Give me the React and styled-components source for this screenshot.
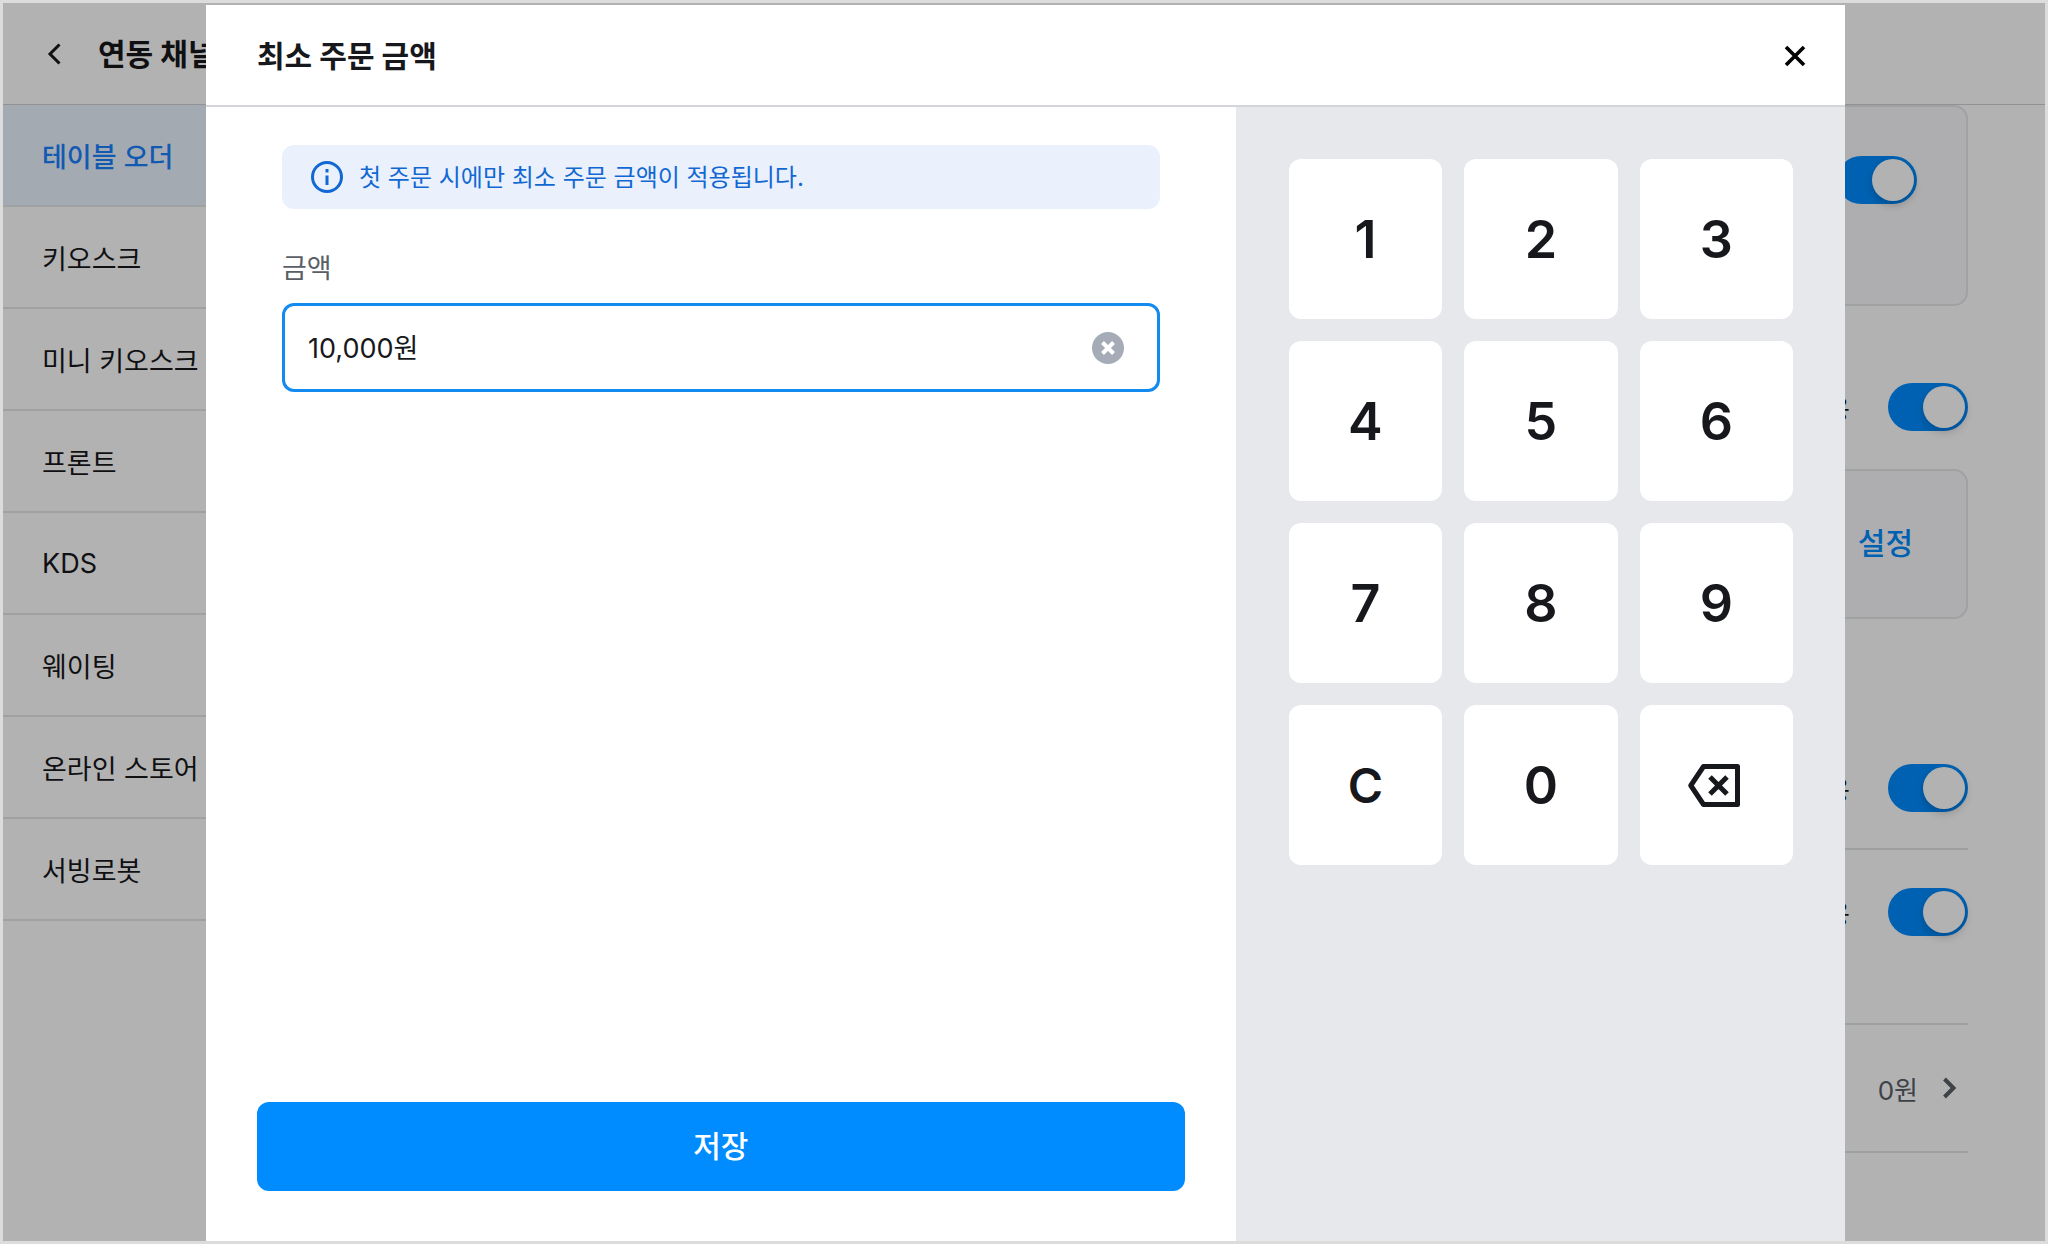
import React, { useState } from "react";
import styled, { createGlobalStyle } from "styled-components";

const blue = "#008cff";
const ink = "#17181c";

const GlobalStyle = createGlobalStyle`
  *, *::before, *::after { box-sizing: border-box; }
  body {
    margin: 0;
    color: ${ink};
    background: #dcdcdc;
    font-family: Inter, "Noto Sans CJK KR", sans-serif;
    font-size: 27px;
  }
  button, input { font: inherit; color: inherit; }
  button { border: 0; padding: 0; background: none; cursor: pointer; }
  h1, h2, p { margin: 0; }
`;

const Frame = styled.div`
  position: relative;
  display: flex;
  flex-direction: column;
  height: 100vh;
  border: 3px solid #dcdcdc;
  background: #fff;
  overflow: hidden;
`;

const AppHeader = styled.header`
  display: flex;
  align-items: center;
  gap: 24px;
  height: 102px;
  flex: none;
  padding: 0 31px;
  border-bottom: 1px solid #d2d2d4;
`;

const IconButton = styled.button`
  display: grid;
  place-items: center;
  width: 40px;
  height: 40px;
`;

const Title = styled.h1`
  font-size: 30px;
  line-height: 40px;
  font-weight: 700;
`;

const Columns = styled.div`
  display: flex;
  flex: 1;
  min-height: 0;
`;

const Sidebar = styled.nav`
  flex: none;
  width: 543px;
  border-right: 1px solid #dfe0e2;
`;

const SideLink = styled.a`
  display: flex;
  align-items: center;
  height: 102px;
  padding: 0 39px;
  border-bottom: 2px solid #e6e7e9;
  text-decoration: none;
  color: ${(p) => (p.$active ? "#1a80ff" : ink)};
  background: ${(p) => (p.$active ? "#eaf4ff" : "transparent")};
  font-weight: ${(p) => (p.$active ? 500 : 400)};
`;

const Main = styled.main`
  flex: 1;
  min-width: 0;
  padding: 0 77px;
`;

const Card = styled.section`
  display: flex;
  justify-content: flex-end;
  align-items: ${(p) => (p.$top ? "flex-start" : "center")};
  height: ${(p) => (p.$top ? 201 : 150)}px;
  padding: 49px;
  border: 2px solid #e6e7e9;
  border-radius: 14px;
  background: #fafafc;
`;

const Setting = styled.section`
  display: flex;
  justify-content: flex-end;
  align-items: center;
  gap: 38px;
  padding-top: ${(p) => p.$top}px;
  padding-bottom: ${(p) => p.$bottom}px;
  border-bottom: ${(p) => (p.$line ? "2px solid #e3e4e6" : "0")};
  font-size: 26px;
`;

const SwitchLabel = styled.label`
  display: flex;
  align-items: center;
  gap: 38px;
`;

const Switch = styled.input`
  appearance: none;
  width: 80px;
  height: 48px;
  margin: 0;
  padding: 3px;
  border-radius: 24px;
  background: #c5c8ce;
  cursor: pointer;

  &::before {
    content: "";
    display: block;
    width: 42px;
    height: 42px;
    border-radius: 50%;
    background: #fff;
    box-shadow: 0 4px 10px rgba(0, 0, 0, 0.2);
  }
  &:checked { background: ${blue}; }
  &:checked::before { margin-left: 32px; }
`;

const TextButton = styled.button`
  padding: 0 4px 2px;
  color: ${blue};
  font-size: 30px;
  line-height: 40px;
  font-weight: 500;
`;

const ValueButton = styled.button`
  display: flex;
  align-items: center;
  gap: 16px;
  height: 48px;
  color: #5a5f69;
  font-size: 26px;
`;

const Backdrop = styled.div`
  position: absolute;
  inset: 0;
  display: flex;
  padding: 2px 200px 0 203px;
  background: rgba(0, 0, 0, 0.3);
`;

const Dialog = styled.section`
  display: flex;
  flex-direction: column;
  flex: 1;
  min-width: 0;
  background: #fff;
`;

const DialogHeader = styled.header`
  display: flex;
  align-items: center;
  justify-content: space-between;
  flex: none;
  height: 102px;
  padding: 2px 30px 0 51px;
  border-bottom: 2px solid #d3d5d9;
`;

const DialogBody = styled.div`
  display: grid;
  grid-template-columns: minmax(0, 1.69fr) minmax(0, 1fr);
  flex: 1;
  min-height: 0;
`;

const Form = styled.form`
  display: flex;
  flex-direction: column;
  justify-content: space-between;
  padding: 38px 51px 50px;
`;

const Fields = styled.div`
  padding: 0 25px;
`;

const Notice = styled.p`
  display: flex;
  align-items: center;
  gap: 16px;
  height: 64px;
  padding: 0 29px;
  border-radius: 12px;
  background: #eaf1fc;
  color: #1268d3;
  font-size: 24px;
`;

const NoticeText = styled.span`
  padding-bottom: 4px;
`;

const FieldLabel = styled.label`
  display: block;
  margin: 40px 0 14px;
  color: #5a5e66;
  line-height: 40px;
`;

const AmountBox = styled.div`
  display: flex;
  align-items: center;
  height: 89px;
  padding: 0 33px 0 23px;
  border: 3px solid #128af0;
  border-radius: 12px;
`;

const AmountInput = styled.input`
  flex: 1;
  min-width: 0;
  padding: 0 0 2px;
  border: 0;
  outline: 0;
  background: none;
`;

const ClearButton = styled(IconButton)`
  width: 32px;
  height: 32px;
`;

const SaveButton = styled.button`
  height: 89px;
  padding-bottom: 6px;
  border-radius: 12px;
  background: ${blue};
  color: #fff;
  font-size: 30px;
  font-weight: 500;
`;

const Keypad = styled.div`
  display: grid;
  grid-template-columns: repeat(3, minmax(0, 1fr));
  grid-auto-rows: 160px;
  align-content: start;
  gap: 22px;
  padding: 52px 52px 52px 53px;
  background: #e6e8ec;
`;

const Key = styled.button`
  display: grid;
  place-items: center;
  border-radius: 12px;
  background: #fff;
  font-size: ${(p) => (p.$letter ? 48 : 52)}px;
  font-weight: 600;
`;

const channels = ["테이블 오더", "키오스크", "미니 키오스크", "프론트", "KDS", "웨이팅", "온라인 스토어 /", "서빙로봇"];
const keys = ["1", "2", "3", "4", "5", "6", "7", "8", "9", "C", "0", "back"];

const BackIcon = () => (
  <svg width="14" height="22" viewBox="0 0 14 22" fill="none" stroke="currentColor" strokeWidth="3" aria-hidden="true">
    <path d="M12.500 1.500 3 11l9.500 9.500" />
  </svg>
);

const NextIcon = () => (
  <svg width="34" height="24" viewBox="0 0 34 24" fill="none" stroke="currentColor" strokeWidth="4" aria-hidden="true">
    <path d="m10.500 3 9 9-9 9" />
  </svg>
);

const CloseIcon = () => (
  <svg width="22" height="22" viewBox="0 0 22 22" fill="none" stroke="#000" strokeWidth="3.600" aria-hidden="true">
    <path d="m2 2 18 18M20 2 2 20" />
  </svg>
);

const InfoIcon = () => (
  <svg width="32" height="32" viewBox="0 0 32 32" fill="none" stroke="currentColor" strokeWidth="3" aria-hidden="true">
    <circle cx="16" cy="16" r="14.500" />
    <path d="M16 14.500V24M16 8v3.500" />
  </svg>
);

const ClearIcon = () => (
  <svg width="32" height="32" viewBox="0 0 32 32" fill="none" aria-hidden="true">
    <circle cx="16" cy="16" r="16" fill="#a5abb7" />
    <path d="m10.500 10.500 11 11M21.500 10.500l-11 11" stroke="#fff" strokeWidth="4" />
  </svg>
);

const BackspaceIcon = () => (
  <svg width="56" height="43" viewBox="0 0 56 43" fill="none" stroke="currentColor" strokeWidth="5" strokeLinejoin="round" aria-hidden="true">
    <path d="M15.500 2.500h34v38h-34L2.800 21.500Z" />
    <path d="m22 13 17 17M39 13 22 30" />
  </svg>
);

function Toggle({ label, name }) {
  return (
    <SwitchLabel>
      {label}
      <Switch type="checkbox" role="switch" defaultChecked aria-label={name} />
    </SwitchLabel>
  );
}

export default function App() {
  const [digits, setDigits] = useState("10000");
  const shown = digits ? `${Number(digits).toLocaleString("en-US")}원` : "";

  const press = (key) => {
    if (key === "C") setDigits("");
    else if (key === "back") setDigits((d) => d.slice(0, -1));
    else setDigits((d) => (d + key).slice(0, 9));
  };

  return (
    <>
      <GlobalStyle />
      <Frame>
        <AppHeader>
          <IconButton type="button" aria-label="뒤로"><BackIcon /></IconButton>
          <Title>연동 채널</Title>
        </AppHeader>
        <Columns>
          <Sidebar>
            {channels.map((name, i) => (
              <SideLink key={name} href="#" $active={i === 0}>{name}</SideLink>
            ))}
          </Sidebar>
          <Main>
            <Card $top><Toggle name="테이블 오더" /></Card>
            <Setting $top={77} $bottom={38}><Toggle label="사용" /></Setting>
            <Card><TextButton type="button">설정</TextButton></Card>
            <Setting $top={145} $bottom={36} $line><Toggle label="사용" /></Setting>
            <Setting $top={38} $bottom={87} $line><Toggle label="사용" /></Setting>
            <Setting $top={39} $bottom={39} $line>
              <ValueButton type="button">0원<NextIcon /></ValueButton>
            </Setting>
          </Main>
        </Columns>

        <Backdrop>
          <Dialog role="dialog" aria-modal="true" aria-labelledby="dialog-title">
            <DialogHeader>
              <Title as="h2" id="dialog-title">최소 주문 금액</Title>
              <IconButton type="button" aria-label="닫기"><CloseIcon /></IconButton>
            </DialogHeader>
            <DialogBody>
              <Form onSubmit={(e) => e.preventDefault()}>
                <Fields>
                  <Notice>
                    <InfoIcon />
                    <NoticeText>첫 주문 시에만 최소 주문 금액이 적용됩니다.</NoticeText>
                  </Notice>
                  <FieldLabel htmlFor="amount">금액</FieldLabel>
                  <AmountBox>
                    <AmountInput
                      id="amount"
                      inputMode="numeric"
                      value={shown}
                      onChange={(e) => setDigits(e.target.value.replace(/\D/g, ""))}
                    />
                    <ClearButton type="button" aria-label="지우기" onClick={() => setDigits("")}>
                      <ClearIcon />
                    </ClearButton>
                  </AmountBox>
                </Fields>
                <SaveButton type="submit">저장</SaveButton>
              </Form>
              <Keypad>
                {keys.map((key) => (
                  <Key
                    key={key}
                    type="button"
                    $letter={key === "C"}
                    onClick={() => press(key)}
                    aria-label={key === "back" ? "한 글자 지우기" : undefined}
                  >
                    {key === "back" ? <BackspaceIcon /> : key}
                  </Key>
                ))}
              </Keypad>
            </DialogBody>
          </Dialog>
        </Backdrop>
      </Frame>
    </>
  );
}
